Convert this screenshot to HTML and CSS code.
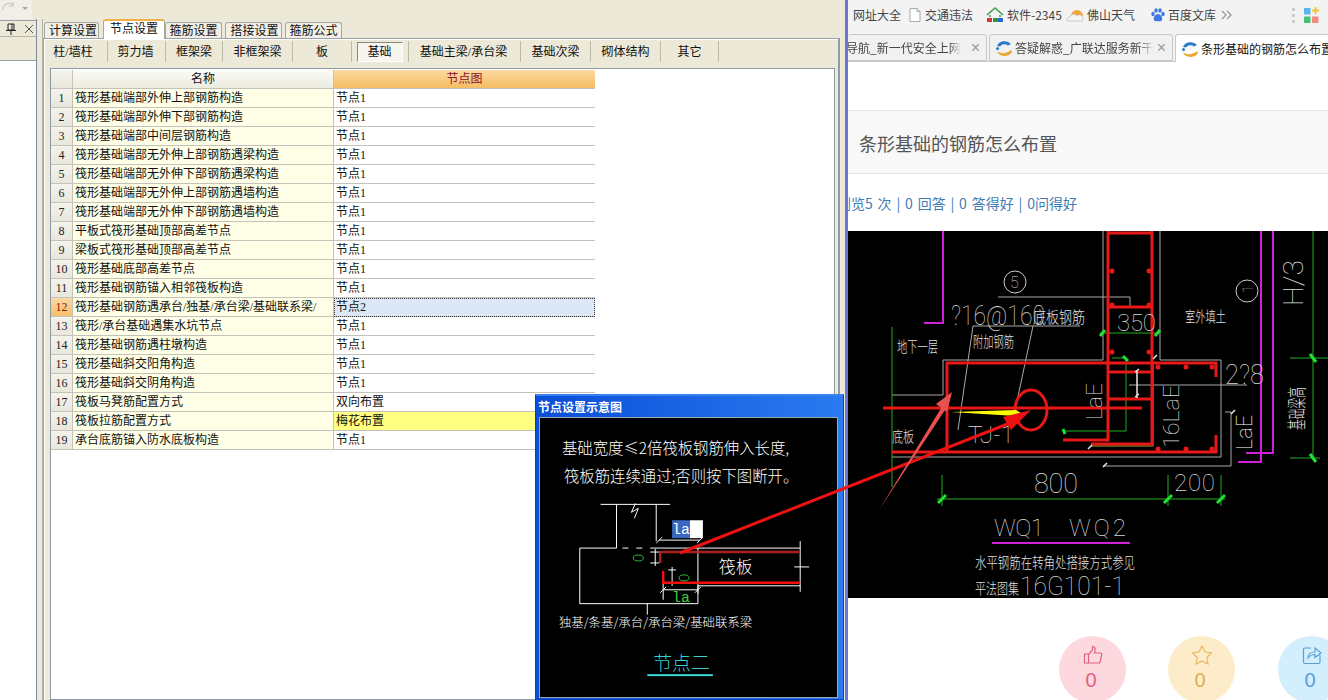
FILE: index.html
```html
<!DOCTYPE html>
<html lang="zh">
<head>
<meta charset="utf-8">
<title>节点设置</title>
<link rel="stylesheet" href="styles.css">
</head>
<body>
<div class="screen">
  <section class="app">
    <div class="app-top"><div class="quick"><svg width="32" height="18" viewBox="0 0 32 18"><path class="quick-icon" d="M3 10a6 6 0 0 1 10-5M13 2v4h-4"/><path class="quick-arrow" d="M22 7h6l-3 3z"/></svg></div></div>
    <div class="app-body">
      <aside class="dock">
        <div class="dock-head">
          <svg width="10" height="12" viewBox="0 0 10 12"><path class="pin" d="M2 1h6v6H2zM6 1v6M0 7.500h10M5 8v4"/></svg>
          <svg width="10" height="10" viewBox="0 0 10 10"><path class="dock-x" d="M1 1l8 8M9 1l-8 8"/></svg>
        </div>
        <div class="dock-gap"></div>
        <div class="dock-list"></div>
      </aside>
      <div class="dock-rail"></div>
      <div class="settings">
        <div class="tabs">
          <span class="tab t1">计算设置</span>
          <span class="tab active t2">节点设置</span>
          <span class="tab t3">箍筋设置</span>
          <span class="tab t4">搭接设置</span>
          <span class="tab t5">箍筋公式</span>
        </div>
        <div class="panel">
          <div class="subtabs">
            <span class="sub s1">柱/墙柱</span>
            <span class="sub s2">剪力墙</span>
            <span class="sub s3">框架梁</span>
            <span class="sub s4">非框架梁</span>
            <span class="sub s5">板</span>
            <span class="sub s6"><b class="pressed">基础</b></span>
            <span class="sub s7">基础主梁/承台梁</span>
            <span class="sub s8">基础次梁</span>
            <span class="sub s9">砌体结构</span>
            <span class="sub s10">其它</span>
          </div>
          <div class="sheet">
            <div class="grid">
              <div class="hd idx"></div><div class="hd name-h">名称</div><div class="hd node-h">节点图</div>
              <div class="idx">1</div><div class="name">筏形基础端部外伸上部钢筋构造</div><div class="node">节点1</div>
              <div class="idx">2</div><div class="name">筏形基础端部外伸下部钢筋构造</div><div class="node">节点1</div>
              <div class="idx">3</div><div class="name">筏形基础端部中间层钢筋构造</div><div class="node">节点1</div>
              <div class="idx">4</div><div class="name">筏形基础端部无外伸上部钢筋遇梁构造</div><div class="node">节点1</div>
              <div class="idx">5</div><div class="name">筏形基础端部无外伸下部钢筋遇梁构造</div><div class="node">节点1</div>
              <div class="idx">6</div><div class="name">筏形基础端部无外伸上部钢筋遇墙构造</div><div class="node">节点1</div>
              <div class="idx">7</div><div class="name">筏形基础端部无外伸下部钢筋遇墙构造</div><div class="node">节点1</div>
              <div class="idx">8</div><div class="name">平板式筏形基础顶部高差节点</div><div class="node">节点1</div>
              <div class="idx">9</div><div class="name">梁板式筏形基础顶部高差节点</div><div class="node">节点1</div>
              <div class="idx">10</div><div class="name">筏形基础底部高差节点</div><div class="node">节点1</div>
              <div class="idx">11</div><div class="name">筏形基础钢筋锚入相邻筏板构造</div><div class="node">节点1</div>
              <div class="idx cur">12</div><div class="name">筏形基础钢筋遇承台/独基/承台梁/基础联系梁/</div><div class="node sel">节点2</div>
              <div class="idx">13</div><div class="name">筏形/承台基础遇集水坑节点</div><div class="node">节点1</div>
              <div class="idx">14</div><div class="name">筏形基础钢筋遇柱墩构造</div><div class="node">节点1</div>
              <div class="idx">15</div><div class="name">筏形基础斜交阳角构造</div><div class="node">节点1</div>
              <div class="idx">16</div><div class="name">筏形基础斜交阴角构造</div><div class="node">节点1</div>
              <div class="idx">17</div><div class="name">筏板马凳筋配置方式</div><div class="node">双向布置</div>
              <div class="idx">18</div><div class="name">筏板拉筋配置方式</div><div class="node yellow">梅花布置</div>
              <div class="idx">19</div><div class="name">承台底筋锚入防水底板构造</div><div class="node">节点1</div>
            </div>
          </div>
        </div>
      </div>
    </div>
  </section>

  <div class="divider"></div>

  <section class="browser">
    <div class="bookmarks">
      <span class="bm b1">网址大全</span>
      <span class="bm b2"><svg class="ic" width="14" height="16" viewBox="0 0 14 16"><path class="doc" d="M2 1.500h7l3 3v10H2zM9 1.500v3h3"/></svg>交通违法</span>
      <span class="bm b3"><svg class="ic" width="18" height="16" viewBox="0 0 18 16"><path class="house" d="M1 8l8-7 8 7M4 8v2M14 8v2"/><rect class="h-a" x="1" y="11" width="5" height="4"/><rect class="h-b" x="7" y="11" width="5" height="4"/><rect class="h-c" x="12" y="11" width="5" height="4"/></svg>软件-2345</span>
      <span class="bm b4"><svg class="ic" width="18" height="16" viewBox="0 0 18 16"><path class="sun" d="M5 9a6 6 0 0 1 12 0z"/><path class="cloud" d="M1 14a3 3 0 0 1 3-4 4 4 0 0 1 7-1 3 3 0 0 1 5 5z"/></svg>佛山天气</span>
      <span class="bm b5"><svg class="ic" width="15" height="16" viewBox="0 0 15 16"><g class="paw"><ellipse cx="3" cy="7" rx="1.700" ry="2.200"/><ellipse cx="6" cy="3.500" rx="1.700" ry="2.200"/><ellipse cx="10" cy="3.500" rx="1.700" ry="2.200"/><ellipse cx="13" cy="7" rx="1.700" ry="2.200"/><path d="M8 7c3 0 5 4 4 6s-3 1-4 1-3 1-4-1 1-6 4-6z"/></g></svg>百度文库</span>
      <svg class="more" width="11" height="10" viewBox="0 0 11 10"><path d="M1 1l4 4-4 4M6 1l4 4-4 4"/></svg>
      <span class="vdots"><i></i><i></i><i></i></span>
      <svg class="apps" width="15" height="16" viewBox="0 0 15 16"><rect class="a1" x="0" y="1" width="6.500" height="6.500"/><path class="a2" d="M10.500 0h2v2.500H15v2h-2.500V7h-2V4.500H8v-2h2.500z"/><rect class="a3" x="0" y="9.500" width="6.500" height="6.500"/><rect class="a4" x="8" y="9.500" width="6.500" height="6.500"/></svg>
    </div>
    <div class="btabs">
      <div class="btab first"><span class="btab-text clip-left fade"><bdi>导航_新一代安全上网</bdi></span><span class="bx">×</span></div>
      <div class="btab second"><svg class="fav" viewBox="0 0 18 16"><use href="#fav"/></svg><span class="btab-text fade">答疑解惑_广联达服务新干线</span><span class="bx">×</span></div>
      <div class="btab on"><svg class="fav" viewBox="0 0 18 16"><use href="#fav"/></svg><span class="btab-text">条形基础的钢筋怎么布置</span></div>
    </div>
    <div class="blank"></div>
    <h1 class="qtitle">条形基础的钢筋怎么布置</h1>
    <div class="stats"><p>浏览5 次 | 0 回答 | 0 答得好 | 0问得好</p></div>
    <svg class="cad" viewBox="848 231 480 367" width="480" height="367">
      <g class="l-mag">
        <path d="M943 231V323H924M1261 231V462H1238M1273 231V453H1246M992 543H1130"/>
      </g>
      <g class="l-grey">
        <path d="M1103 231V360H943V395H892M1160 231V360H1221V457H892M1225 412H1231V466H1103M998 297H1130V307M973 326H1080M973 326L958 430M1033 326L1013 420M1129 385H1247"/>
      </g>
      <g class="l-green">
        <path d="M892 327V487M937 499H1225M942 475V506M1168 475V506M1221 475V506M1100 333H1160M1112 358H1127M1126 358V431H1063M1313 231V458M1290 358H1328M1290 458H1320"/>
      </g>
      <g class="ticks">
        <path d="M938 503L946 495M1164 503L1172 495M1217 503L1225 495M1310 354L1316 362M1310 454L1316 462M1100 336L1105 330M1155 336L1160 330M1123 356L1128 361M1063 429L1065 434"/>
      </g>
      <path class="l-olive" d="M1153 365V446H1091"/>
      <g class="l-red">
        <path d="M1108 231V440H1063M1152 231V444H1091M1108 233H1152M1108 307H1152M947 452V363H1216V377M892 452H1216V435M883 408H1142M1108 372H1152M1108 399H1152"/>
        <ellipse class="ring" cx="1031" cy="410" rx="16" ry="20"/>
      </g>
      <g class="dots">
        <circle cx="1112" cy="271" r="2.500"/><circle cx="1149" cy="271" r="2.500"/><circle cx="1112" cy="305" r="2.500"/><circle cx="1149" cy="305" r="2.500"/><circle cx="1112" cy="352" r="2.500"/><circle cx="1149" cy="352" r="2.500"/><circle cx="1158" cy="367" r="2.500"/><circle cx="1186" cy="367" r="2.500"/><circle cx="1212" cy="367" r="2.500"/><circle cx="1158" cy="449" r="2.500"/><circle cx="1186" cy="449" r="2.500"/><circle cx="1212" cy="449" r="2.500"/>
      </g>
      <polygon class="yel" points="951,412 1016,410 1021,413 1016,416"/>
      <g class="marks"><path d="M1153 359L1157 355M1088 449L1092 445M1103 467L1107 463M1137 370V398M1135 372L1139 369M1135 397L1139 394M1231 414L1235 410"/></g>
      <circle class="round" cx="1015" cy="282" r="11"/>
      <circle class="round" cx="1247" cy="291" r="11"/>
      <text class="t thin" x="1010" y="288" font-size="16">5</text>
      <text class="t thin" transform="translate(1253 293) rotate(-90)" font-size="15">1</text>
      <text class="t thin" x="951" y="325" font-size="27" textLength="94" lengthAdjust="spacingAndGlyphs">?16@160</text>
      <text class="t cn" x="1033" y="323" font-size="16" textLength="52" lengthAdjust="spacingAndGlyphs">底板钢筋</text>
      <text class="t cn" x="973" y="347" font-size="15" textLength="41" lengthAdjust="spacingAndGlyphs">附加钢筋</text>
      <text class="t cn" x="897" y="352" font-size="15" textLength="41" lengthAdjust="spacingAndGlyphs">地下一层</text>
      <text class="t thin" x="1117" y="331" font-size="24" textLength="39">350</text>
      <text class="t cn" x="1185" y="322" font-size="15" textLength="41" lengthAdjust="spacingAndGlyphs">室外填土</text>
      <text class="t thin" x="1225" y="384" font-size="27" textLength="39" lengthAdjust="spacingAndGlyphs">2?8</text>
      <text class="t thin" transform="translate(1102 420) rotate(-90)" font-size="22" textLength="37" lengthAdjust="spacingAndGlyphs">LaE</text>
      <text class="t thin" transform="translate(1179 448) rotate(-90)" font-size="22" textLength="63" lengthAdjust="spacingAndGlyphs">16LaE</text>
      <text class="t bold" transform="translate(1252 450) rotate(-90)" font-size="22" textLength="35" lengthAdjust="spacingAndGlyphs">LaE</text>
      <text class="t thin" transform="translate(1303 306) rotate(-90)" font-size="27" textLength="46" lengthAdjust="spacingAndGlyphs">H/3</text>
      <text class="t cn" transform="translate(1304 430) rotate(-90)" font-size="19" textLength="43" lengthAdjust="spacingAndGlyphs">基础梁高</text>
      <text class="t thin" x="968" y="443" font-size="24" textLength="46" lengthAdjust="spacingAndGlyphs">TJ-1</text>
      <text class="t cn" x="892" y="442" font-size="15" textLength="22" lengthAdjust="spacingAndGlyphs">底板</text>
      <text class="t thin" x="1034" y="493" font-size="27" textLength="44">800</text>
      <text class="t thin" x="1174" y="491" font-size="24" textLength="41">200</text>
      <text class="t thin" x="994" y="536" font-size="24" textLength="50">WQ1</text>
      <text class="t thin" x="1069" y="536" font-size="24" textLength="57">WQ2</text>
      <text class="t cn" x="975" y="568" font-size="15" textLength="160" lengthAdjust="spacingAndGlyphs">水平钢筋在转角处搭接方式参见</text>
      <text class="t cn" x="975" y="594" font-size="15" textLength="44" lengthAdjust="spacingAndGlyphs">平法图集</text>
      <text class="t thin" x="1020" y="595" font-size="26" textLength="105" lengthAdjust="spacingAndGlyphs">16G101-1</text>
    </svg>
    <div class="actions">
      <div class="act like">
        <svg width="20" height="20" viewBox="0 0 20 20"><path d="M1.500 9h4v9h-4zM5.500 9.500l4-4.500V1.500c2 0 3 1.500 2.500 4L11.500 8H18c1 .5 1 1.500.5 2.500l-1.500 7-1 .5H5.500"/></svg>
        <span>0</span>
      </div>
      <div class="act fav-act">
        <svg width="22" height="20" viewBox="0 0 22 20"><path d="M11 1l3 6 6.500 1-4.700 4.500 1.200 6.500L11 16l-6 3 1.200-6.500L1.500 8 8 7z"/></svg>
        <span>0</span>
      </div>
      <div class="act share">
        <svg width="20" height="20" viewBox="0 0 20 20"><path d="M9 3H3a1.500 1.500 0 0 0-1.500 1.500v12.500A1.500 1.500 0 0 0 3 18.500h13.500a1.500 1.500 0 0 0 1.500-1.500V10M6 13c0-4 3-6 7-6V3l6 5-6 4.500V9.500c-3 0-5 1-7 3.500z"/></svg>
        <span>0</span>
      </div>
    </div>
  </section>

  <div class="dialog">
    <div class="dlg-title">节点设置示意图</div>
    <svg class="dlg-pic" viewBox="539 417 299 281" width="299" height="281">
      <text class="d-main" x="561" y="453">基础宽度≤2倍筏板钢筋伸入长度,</text>
      <text class="d-main" x="563" y="481">筏板筋连续通过;否则按下图断开。</text>
      <path class="d-w" d="M600 504H670M616 504V548M656 504V541M579 548H616M622 548H628M636 548H642M650 548H660M660 548H801M579 548V604H698V548M698 586H801M801 541V592M647 604V615M635 503L631 512L638 508L634 518"/>
      <path class="d-w" d="M659 540H700M656 543L662 537M697 543L703 537M650 552H662M650 563H659M655 549V566M668 570H676M668 583H676M672 567V586M663 590H698M660 593L666 587M695 593L701 587M663 584V600M698 586V594M795 567H810"/>
      <path class="d-rd" d="M660 563V552H801"/>
      <path class="d-rb" d="M663 571V583H801"/>
      <ellipse class="d-g" cx="638" cy="558" rx="5" ry="3"/>
      <ellipse class="d-g" cx="684" cy="578" rx="5" ry="3"/>
      <rect class="d-blue" x="672" y="520" width="18" height="18"/>
      <rect class="d-white" x="690" y="520" width="13" height="18"/>
      <text class="d-la" x="672" y="534">la</text>
      <text class="d-la green" x="672" y="602">la</text>
      <text class="d-slab" x="719" y="573">筏板</text>
      <text class="d-label" x="558" y="628">独基/条基/承台/承台梁/基础联系梁</text>
      <text class="d-name" x="653" y="671">节点二</text>
      <rect class="d-under" x="647" y="675" width="66" height="2"/>
    </svg>
  </div>

  <svg class="overlay" viewBox="0 0 1328 700" width="1328" height="700">
    <defs>
      <g id="fav"><path class="fav-b" d="M2 6a8 7 0 0 1 14-2l-3 1.500a5 4 0 0 0-8 1z"/><path class="fav-o" d="M2 11c3 3 10 3 14-1l1 2c-3 5-11 5-14 1z"/><circle class="fav-b" cx="2.500" cy="8.500" r="1.500"/></g>
    </defs>
    <path class="arrow-a" d="M680 553L1010 423"/>
    <polygon class="arrow-a-h" points="1031,410 1003,417 1011,430"/>
    <polygon class="arrow-b" points="879,510 943,405 947,407"/>
    <polygon class="arrow-b" points="952,392 936,404 947,412"/>
  </svg>
</div>
</body>
</html>
```
FILE: styles.css
```css
* { box-sizing: border-box; }
html, body { margin: 0; padding: 0; height: 100%; overflow: hidden; background: #ece9d8; }
body { font: 12px/1 "Liberation Serif", "Noto Sans CJK SC", serif; color: #111; }
.screen { position: relative; display: flex; width: 1328px; height: 700px; overflow: hidden; }

/* left application */
.app { width: 845px; display: flex; flex-direction: column; background: #ece9d8; flex: none; }
.app-top { height: 19px; flex: none; }
.quick { width: 32px; height: 19px; background: #f1efe8; }
.quick-icon { fill: none; stroke: #cfcfca; stroke-width: 1.500; }
.quick-arrow { fill: #a9a9a4; }
.app-body { flex: 1; display: flex; min-height: 0; }
.dock { width: 37px; display: flex; flex-direction: column; border-right: 1px solid #7d8a9c; flex: none; }
.dock-head { height: 17px; margin-top: 1px; display: flex; justify-content: space-between; align-items: center; padding: 0 2px 0 6px; border-top: 1px solid #9aa3ad; border-bottom: 1px solid #b9b6a6; }
.pin { fill: none; stroke: #222; stroke-width: 1; }
.dock-x { fill: none; stroke: #555; stroke-width: 1; }
.dock-gap { height: 23px; }
.dock-list { flex: 1; background: #fff; border-top: 1px solid #9aa3ad; }
.dock-rail { width: 6px; flex: none; background: #ece9d8; border-right: 1px solid #b4b2a5; }
.settings { width: 797px; flex: none; display: flex; flex-direction: column; }
.tabs { height: 19px; display: flex; align-items: flex-end; padding-left: 1px; flex: none; }
.tab { height: 16px; display: flex; align-items: center; justify-content: center; font-size: 12px; background: #f2f0e6; border: 1px solid #a3a89f; border-bottom: 0; border-radius: 3px 3px 0 0; margin-right: 3px; }
.t1 { width: 55px; padding-left: 3px; }
.t2 { width: 62px; margin-right: 0; }
.t3 { width: 57px; }
.t4 { width: 57px; padding-left: 2px; }
.t5 { width: 57px; }
.tab.active { height: 20px; background: #fff; border-top: 2px solid #f4b040; border-color: #f4b040 #a3a89f transparent; padding-bottom: 2px; margin-left: 1px; position: relative; top: 1px; z-index: 1; }
.panel { flex: 1; display: flex; flex-direction: column; min-height: 0; border: 1px solid #9aa2a3; border-bottom: 0; border-right: 2px solid #8f9ca0; box-shadow: inset 1px 1px 0 #fff; padding: 2px 5px 0 6px; }
.subtabs { height: 23px; display: flex; flex: none; align-items: stretch; margin-left: -5px; }
.sub { display: flex; align-items: center; justify-content: center; border-right: 1px solid #bdbaa8; height: 21px; }
.s1 { width: 63px; padding-right: 6px; } .s2 { width: 58px; padding-right: 2px; } .s3 { width: 57px; } .s4 { width: 70px; } .s5 { width: 59px; }
.s6 { width: 57px; } .s7 { width: 112px; padding-right: 2px; } .s8 { width: 70px; } .s9 { width: 70px; } .s10 { width: 58px; }
.pressed { font-weight: normal; display: flex; align-items: center; justify-content: center; width: 46px; height: 20px; margin-left: -1px; background: #f6f5ee; border: 1px solid; border-color: #8a897f #fff #fff #8a897f; }
.sheet { flex: 1; min-height: 0; margin-top: 4px; background: #fff; border: 1px solid #8d9aa6; width: 785px; }
.grid { display: grid; grid-template-columns: 22px 261px 261px; grid-auto-rows: 19px; width: 544px; padding-top: 1px; }
.grid > div { display: flex; align-items: center; border-bottom: 1px solid #c3c3bc; white-space: nowrap; overflow: hidden; }
.idx { justify-content: center; background: linear-gradient(#f4f3ec, #e9e7dc); border-right: 1px solid #c3c3bc; color: #222; }
.idx.cur { background: linear-gradient(#fad9a4, #f8bf68); color: #8a1a10; }
.name { background: #feffe6; border-right: 1px solid #c3c3bc; padding-left: 2px; }
.node { background: #fff; padding-left: 2px; }
.hd { justify-content: center; }
.name-h { background: linear-gradient(#fbfbf6, #ecebe0); border-right: 1px solid #c3c3bc; padding-left: 0; }
.node-h { background: linear-gradient(#fbd9a0, #f6bd62); color: #8a1030; }
.node.sel { background: #dde8f7; outline: 1px dotted #333; outline-offset: -1px; }
.node.yellow { background: #ffff80; }

.divider { width: 3px; flex: none; background: #6d77d3; }

/* browser */
.browser { width: 480px; flex: none; background: #fff; display: flex; flex-direction: column; overflow: hidden; }
.bookmarks { height: 35px; flex: none; background: #f3f3f3; display: flex; align-items: center; color: #444; padding-bottom: 5px; }
.bm { display: flex; align-items: center; white-space: nowrap; font-family: "Noto Sans CJK SC", sans-serif; line-height: 16px; }
.ic { margin-right: 3px; flex: none; }
.b1 { margin-left: 5px; width: 55px; }
.b2 { width: 78px; }
.b3 { width: 80px; }
.b4 { width: 84px; }
.b5 { width: 71px; }
.doc { fill: #fff; stroke: #aaa; }
.house { fill: none; stroke: #3e9a4e; stroke-width: 1.500; }
.h-a { fill: #d33; } .h-b { fill: #2a9a4a; } .h-c { fill: #2a6ad0; }
.sun { fill: #f4a63c; }
.cloud { fill: #f4f4f0; stroke: #ccc; }
.paw { fill: #3f78e0; }
.more { flex: none; fill: none; stroke: #999; stroke-width: 1.300; }
.vdots { display: flex; flex-direction: column; gap: 3px; margin-left: 60px; }
.vdots i { display: block; width: 3px; height: 3px; background: #ccc; }
.apps { margin-left: 9px; }
.a1 { fill: #56b4f0; } .a2 { fill: #f5c33c; } .a3 { fill: #47c07a; } .a4 { fill: #ef8a80; }
.btabs { height: 27px; flex: none; background: #f3f3f3; border-bottom: 1px solid #c8c8c8; display: flex; align-items: flex-end; gap: 2px; }
.btab { height: 27px; display: flex; align-items: center; background: #f1f1f1; border: 1px solid #c8c8c8; border-radius: 3px 3px 0 0; overflow: hidden; white-space: nowrap; color: #444; flex: none; font-family: "Noto Sans CJK SC", sans-serif; line-height: 18px; padding-top: 1px; }
.btab.first { width: 139px; border-left: 0; justify-content: flex-end; padding-right: 6px; }
.btab.second { width: 184px; padding-left: 5px; padding-right: 6px; }
.btab.on { flex: 1; min-width: 153px; height: 28px; margin-bottom: -1px; background: #fff; border-bottom: 0; color: #111; padding-left: 5px; border-right: 0; border-radius: 3px 0 0 0; }
.btab-text { overflow: hidden; flex: 1; }
.fade { -webkit-mask-image: linear-gradient(90deg, #000 90%, transparent); mask-image: linear-gradient(90deg, #000 90%, transparent); }
.clip-left { direction: rtl; width: 120px; flex: none; margin-right: 6px; }
.bx { font: 16px/1 "Liberation Sans", sans-serif; color: #999; margin-left: 4px; flex: none; }
.fav { width: 18px; height: 16px; margin-right: 2px; flex: none; }
.fav-b { fill: #2a7ac8; }
.fav-o { fill: #eda531; }
.blank { height: 48px; flex: none; }
.qtitle { margin: 0; height: 64px; flex: none; background: #f8f8f8; border-top: 1px solid #e5e5e5; border-bottom: 1px solid #e5e5e5; padding: 4px 0 0 11px; display: flex; align-items: center; font: 400 18px/1.200 "Noto Sans CJK SC", sans-serif; color: #555; }
.stats { height: 57px; flex: none; overflow: hidden; }
.stats p { margin: 20px 0 0 -11px; font: 14px/18px "Noto Sans CJK SC", sans-serif; color: #3f7cb4; white-space: nowrap; word-spacing: 1.700px; }
.actions { flex: 1; display: flex; padding: 38px 0 0 211px; gap: 42px; }
.act { width: 67px; height: 67px; flex: none; border-radius: 50%; display: flex; flex-direction: column; align-items: center; padding-top: 9px; gap: 5px; font: 20px/1 "Liberation Sans", sans-serif; }
.act span { margin-right: 3px; }
.act svg { fill: none; stroke-width: 1.200; flex: none; }
.like { background: #fdd9df; color: #e2607c; }
.like svg { stroke: #e2607c; }
.fav-act { background: #fdecc9; color: #dcae50; }
.fav-act svg { stroke: #e8b860; }
.share { background: #d3eefc; color: #5aa0d8; margin-left: 1px; }
.share svg { stroke: #5aa0d8; }

/* CAD drawing */
.cad { display: block; flex: none; background: #000; }
.cad path, .cad ellipse, .cad .round { fill: none; }
.l-mag path { stroke: #d020d8; stroke-width: 2; }
.l-grey path { stroke: #aaa; stroke-width: 1; }
.l-green path { stroke: #20b020; stroke-width: 1; }
.ticks path { stroke: #20e030; stroke-width: 3; }
.l-olive { stroke: #a0b020; stroke-width: 1; }
.l-red path { stroke: #e81818; stroke-width: 3; }
.cad .ring { stroke: #e81818; stroke-width: 3; }
.dots circle { fill: #e81818; }
.yel { fill: #ffff00; }
.marks path { stroke: #e8e8e8; stroke-width: 1.500; }
.round { stroke: #ccc; stroke-width: 1; }
.t { fill: #d8d8d8; }
.thin { font-family: Roboto, "Liberation Sans", sans-serif; font-weight: 100; }
.cn { font-family: "Noto Sans CJK SC", sans-serif; font-weight: 300; fill: #e0e0e0; }
.bold { font-family: Roboto, "Liberation Sans", sans-serif; font-weight: 100; fill: #fff; }

/* floating dialog */
.dialog { position: absolute; left: 535px; top: 394px; width: 309px; height: 306px; background: linear-gradient(90deg, #0a4fd8, #2a7af0); border: 1px solid #0a3fc0; border-top: 2px solid #3a80f0; display: flex; flex-direction: column; padding: 0 4px 0 2px; }
.dlg-title { height: 21px; flex: none; color: #fff; font: 700 12px/21px "Noto Sans CJK SC", sans-serif; }
.dlg-pic { display: block; background: #000; flex: none; border: 1px solid #9aa; margin-left: 1px; }
.d-main { font: 300 15.500px "Noto Sans CJK SC", sans-serif; fill: #fff; }
.d-w { fill: none; stroke: #fff; stroke-width: 1; }
.d-rd { fill: none; stroke: #a82020; stroke-width: 2.500; }
.d-rb { fill: none; stroke: #f01010; stroke-width: 2.500; }
.d-g { fill: none; stroke: #20c030; }
.d-blue { fill: #3a68c0; }
.d-white { fill: #fff; }
.d-la { font: 15px "Liberation Mono", monospace; fill: #fff; }
.d-la.green { fill: #40d040; }
.d-slab { font: 300 17px "Noto Sans CJK SC", sans-serif; fill: #fff; }
.d-label { font: 300 12.500px "Noto Sans CJK SC", sans-serif; fill: #fff; }
.d-name { font: 300 19px "Noto Sans CJK SC", sans-serif; fill: #38d0d0; }
.d-under { fill: #40d8d8; }

/* annotation arrows drawn over the screenshot */
.overlay { position: absolute; left: 0; top: 0; pointer-events: none; }
.arrow-a { fill: none; stroke: #ee1111; stroke-width: 3; }
.arrow-a-h { fill: #ee1111; }
.arrow-b { fill: #e85050; }
```
